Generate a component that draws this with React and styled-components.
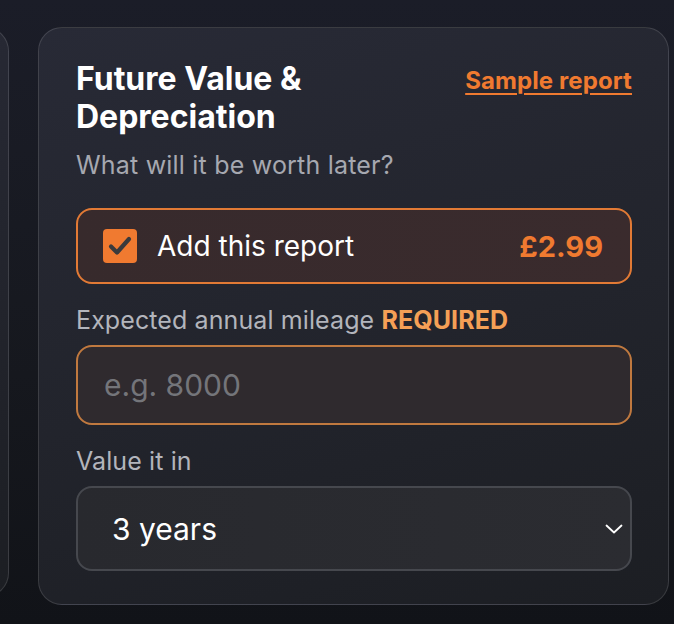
import { useState } from "react";
import styled, { createGlobalStyle } from "styled-components";

const GlobalStyle = createGlobalStyle`
  html, body {
    margin: 0;
    padding: 0;
    background: #15171d;
  }
  body {
    font-family: Inter, "Noto Sans", sans-serif;
    -webkit-font-smoothing: antialiased;
  }
`;

const Page = styled.div`
  width: 674px;
  height: 624px;
  overflow: hidden;
  background: linear-gradient(180deg, #1b1d28 0%, #16181e 60%, #111318 100%);
`;

const Track = styled.div`
  display: flex;
  align-items: flex-start;
  gap: 29px;
  margin-left: -300px;
  padding-top: 27px;
`;

const Card = styled.section`
  flex: none;
  box-sizing: border-box;
  width: ${(p) => p.$width}px;
  height: ${(p) => p.$height}px;
  border: 1.5px solid rgba(255, 255, 255, 0.13);
  border-radius: 24px;
  background: linear-gradient(165deg, #282a36 0%, #22242c 55%, #1c1e23 100%);
  padding: 32px 36px 0 37px;
  display: flex;
  flex-direction: column;
`;

const Header = styled.div`
  display: flex;
  justify-content: space-between;
  align-items: flex-start;
  gap: 16px;
`;

const Title = styled.h2`
  margin: 0;
  font-size: 32px;
  line-height: 38px;
  font-weight: 700;
  color: #ffffff;
`;

const SampleLink = styled.a`
  flex: none;
  margin-top: 6px;
  font-size: 24px;
  line-height: 30px;
  font-weight: 700;
  letter-spacing: 0.1px;
  color: #f07a30;
  text-decoration: underline;
  text-underline-offset: 4px;
  text-decoration-thickness: 2px;
  cursor: pointer;
`;

const Subtitle = styled.p`
  margin: 14px 0 0;
  font-size: 25px;
  line-height: 30px;
  letter-spacing: 0.2px;
  color: #a6a8b0;
`;

const AddRow = styled.label`
  margin-top: 28px;
  box-sizing: border-box;
  height: 76px;
  display: flex;
  align-items: center;
  padding: 0 27px 0 25px;
  border: 2px solid #e27a35;
  border-radius: 16px;
  background: linear-gradient(90deg, #372a2c 0%, #3a2b2d 100%);
  cursor: pointer;
`;

const CheckBox = styled.span`
  flex: none;
  width: 34px;
  height: 34px;
  border-radius: 4px;
  background: #f07a30;
  display: flex;
  align-items: center;
  justify-content: center;
`;

const AddText = styled.span`
  margin-left: 20px;
  flex: 1;
  font-size: 28px;
  color: #ffffff;
`;

const Price = styled.span`
  font-size: 29px;
  font-weight: 700;
  color: #f07a30;
`;

const FieldLabel = styled.div`
  margin-top: 21px;
  font-size: 25px;
  line-height: 30px;
  letter-spacing: 0.1px;
  color: #b3b5bc;
`;

const Required = styled.span`
  font-weight: 700;
  color: #f5a056;
`;

const Input = styled.input`
  margin-top: 10px;
  box-sizing: border-box;
  width: 100%;
  height: 80px;
  padding: 0 26px;
  border: 2px solid #c0793f;
  border-radius: 16px;
  background: #2f2a2e;
  color: #ffffff;
  font-family: inherit;
  font-size: 30px;
  outline: none;

  &::placeholder {
    color: #74757a;
  }
`;

const SelectWrap = styled.div`
  position: relative;
  margin-top: 10px;
`;

const Select = styled.select`
  appearance: none;
  box-sizing: border-box;
  width: 100%;
  height: 85px;
  padding: 0 34px;
  border: 2px solid #46484e;
  border-radius: 16px;
  background: linear-gradient(90deg, #28292e 0%, #2b2c31 100%);
  color: #ffffff;
  font-family: inherit;
  font-size: 30px;
  outline: none;
`;

const Chevron = styled.svg`
  position: absolute;
  right: 8px;
  top: 36px;
  pointer-events: none;
`;

export default function App() {
  const [checked, setChecked] = useState(true);
  const [years, setYears] = useState("3");

  return (
    <Page>
      <GlobalStyle />
      <Track>
        <Card $width={309} $height={570} />
        <Card $width={631} $height={578}>
          <Header>
            <Title>Future Value &amp; Depreciation</Title>
            <SampleLink>Sample report</SampleLink>
          </Header>
          <Subtitle>What will it be worth later?</Subtitle>

          <AddRow onClick={() => setChecked(!checked)}>
            <CheckBox>
              {checked && (
                <svg width="28" height="28" viewBox="0 0 28 28">
                  <polyline
                    points="5,14.5 11,20.5 23,7"
                    fill="none"
                    stroke="#3a3a3c"
                    strokeWidth="4.2"
                    strokeLinecap="round"
                    strokeLinejoin="round"
                  />
                </svg>
              )}
            </CheckBox>
            <AddText>Add this report</AddText>
            <Price>£2.99</Price>
          </AddRow>

          <FieldLabel>
            Expected annual mileage <Required>REQUIRED</Required>
          </FieldLabel>
          <Input placeholder="e.g. 8000" />

          <FieldLabel>Value it in</FieldLabel>
          <SelectWrap>
            <Select value={years} onChange={(e) => setYears(e.target.value)}>
              <option value="1">1 year</option>
              <option value="2">2 years</option>
              <option value="3">3 years</option>
              <option value="5">5 years</option>
            </Select>
            <Chevron width="20" height="14" viewBox="0 0 20 14">
              <polyline
                points="2.5,3.5 10,10.5 17.5,3.5"
                fill="none"
                stroke="#ffffff"
                strokeWidth="1.8"
                strokeLinecap="round"
                strokeLinejoin="round"
              />
            </Chevron>
          </SelectWrap>
        </Card>
      </Track>
    </Page>
  );
}
